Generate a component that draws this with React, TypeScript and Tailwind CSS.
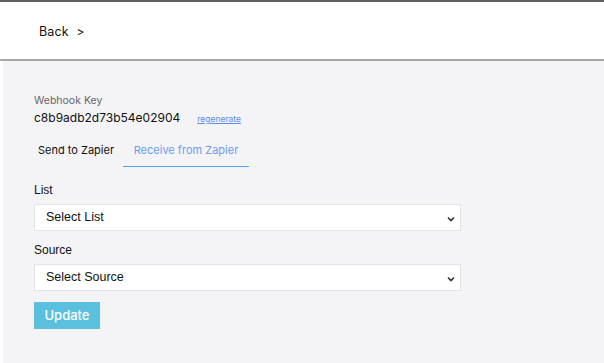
import React from "react";

function Chevron() {
  return (
    <svg width="8" height="6" viewBox="0 0 8 6" className="absolute right-[5px] top-[11px]">
      <path d="M1 1.5 L4 4.5 L7 1.5" fill="none" stroke="#333" strokeWidth="1.6" />
    </svg>
  );
}

function SelectBox({ label }: { label: string }) {
  return (
    <div className="relative w-[427px] h-[27px] bg-white border border-[#e4e4e6] flex items-center pl-[11px]" style={{ fontFamily: '"Liberation Sans", Arial, sans-serif' }}>
      <span className="text-[12.5px] text-[#111]">{label}</span>
      <Chevron />
    </div>
  );
}

export default function App() {
  const poppins = { fontFamily: 'Inter, "Noto Sans", sans-serif' };
  return (
    <div className="w-[604px] h-[363px] bg-white flex flex-col overflow-hidden" style={poppins}>
      <div className="h-[61px] shrink-0 border-t-2 border-t-[#5f5f5f] border-b-2 border-b-[#a8a8a8] bg-white flex items-center pl-[39px] pt-[3px]">
        <span className="text-[12.5px] text-[#111] tracking-[0.1px]">Back</span>
        <span className="text-[12px] text-[#111] ml-[8px]">&gt;</span>
      </div>
      <div className="flex-1 ml-[3px] bg-[#f4f4f6] pl-[31px] pt-[33px]">
        <div className="text-[10.5px] text-[#666] leading-[14px]">Webhook Key</div>
        <div className="flex items-baseline mt-[2px]">
          <span className="text-[12px] text-[#111] leading-[16px]">c8b9adb2d73b54e02904</span>
          <span className="text-[8.5px] text-[#5b8def] underline ml-[17px]">regenerate</span>
        </div>
        <div className="flex mt-[12px] h-[29px]">
          <div className="w-[89px] pl-[4px] text-[11px] text-[#111] flex items-center pb-[4px]">Send to Zapier</div>
          <div className="w-[126px] border-b-[1.5px] border-[#4fa7ea] text-[11px] text-[#6b9cf0] flex items-center justify-center pb-[4px]">Receive from Zapier</div>
        </div>
        <div className="mt-[16px] text-[12px] text-[#111] leading-[14px]" style={{ fontFamily: '"Liberation Sans", Arial, sans-serif' }}>List</div>
        <div className="mt-[7px]"><SelectBox label="Select List" /></div>
        <div className="mt-[12px] text-[12px] text-[#111] leading-[14px]" style={{ fontFamily: '"Liberation Sans", Arial, sans-serif' }}>Source</div>
        <div className="mt-[7px]"><SelectBox label="Select Source" /></div>
        <button className="mt-[11px] w-[66px] h-[27px] bg-[#5bc0de] text-white text-[13px] font-medium flex items-center justify-center" style={{ fontFamily: 'Inter, "Liberation Sans", Arial, sans-serif' }}>Update</button>
      </div>
    </div>
  );
}
